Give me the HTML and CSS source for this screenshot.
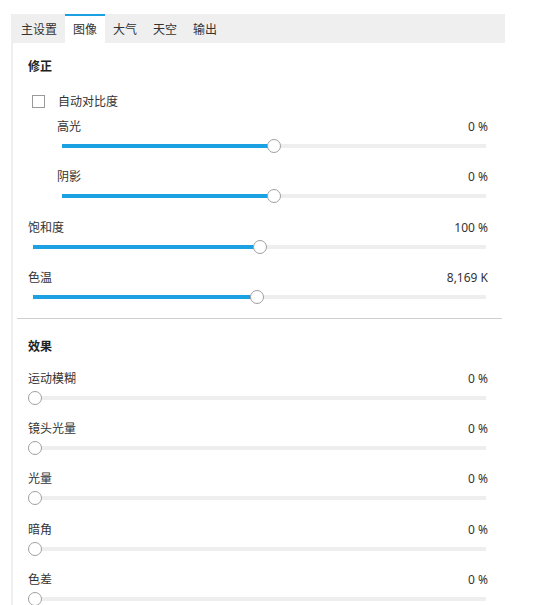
FILE: index.html
```html
<!DOCTYPE html>
<html lang="zh">
<head>
<meta charset="utf-8">
<link rel="stylesheet" href="styles.css">
</head>
<body>
<div class="app">
  <div class="tabs">
    <div class="tab">主设置</div>
    <div class="tab active">图像</div>
    <div class="tab">大气</div>
    <div class="tab">天空</div>
    <div class="tab">输出</div>
  </div>
  <div class="panel">
    <section class="group">
      <h3 class="heading">修正</h3>
      <label class="check-row"><span class="checkbox"></span><span>自动对比度</span></label>
      <div class="row indent">
        <div class="row-head"><span>高光</span><span class="val">0 %</span></div>
        <div class="slider" style="--p:0.5"><div class="fill"></div><div class="thumb"></div></div>
      </div>
      <div class="row indent">
        <div class="row-head"><span>阴影</span><span class="val">0 %</span></div>
        <div class="slider" style="--p:0.5"><div class="fill"></div><div class="thumb"></div></div>
      </div>
      <div class="row">
        <div class="row-head"><span>饱和度</span><span class="val">100 %</span></div>
        <div class="slider" style="--p:0.5"><div class="fill"></div><div class="thumb"></div></div>
      </div>
      <div class="row">
        <div class="row-head"><span>色温</span><span class="val">8,169 K</span></div>
        <div class="slider" style="--p:0.494"><div class="fill"></div><div class="thumb"></div></div>
      </div>
    </section>
    <hr class="divider">
    <section class="group effects">
      <h3 class="heading">效果</h3>
      <div class="row">
        <div class="row-head"><span>运动模糊</span><span class="val">0 %</span></div>
        <div class="slider" style="--p:0"><div class="fill"></div><div class="thumb"></div></div>
      </div>
      <div class="row">
        <div class="row-head"><span>镜头光量</span><span class="val">0 %</span></div>
        <div class="slider" style="--p:0"><div class="fill"></div><div class="thumb"></div></div>
      </div>
      <div class="row">
        <div class="row-head"><span>光量</span><span class="val">0 %</span></div>
        <div class="slider" style="--p:0"><div class="fill"></div><div class="thumb"></div></div>
      </div>
      <div class="row">
        <div class="row-head"><span>暗角</span><span class="val">0 %</span></div>
        <div class="slider" style="--p:0"><div class="fill"></div><div class="thumb"></div></div>
      </div>
      <div class="row">
        <div class="row-head"><span>色差</span><span class="val">0 %</span></div>
        <div class="slider" style="--p:0"><div class="fill"></div><div class="thumb"></div></div>
      </div>
    </section>
  </div>
</div>
</body>
</html>
```
FILE: styles.css
```css
html, body {
  margin: 0;
  padding: 0;
  background: #fff;
}
body {
  font-family: "Noto Sans", "Noto Sans CJK SC", sans-serif;
  font-size: 12px;
  color: #333;
  overflow: hidden;
}
.app {
  margin: 14px 0 0 11px;
  width: 494px;
}
.tabs {
  display: flex;
  height: 29px;
  background: #efefef;
  padding-left: 2px;
}
.tab {
  padding: 0 8px;
  box-sizing: border-box;
  display: flex;
  align-items: center;
  justify-content: center;
  border-top: 2px solid transparent;
  line-height: 16px;
  color: #333;
}
.tab.active {
  background: #fff;
  border-top-color: #1ba1e2;
}
.panel {
  border-left: 2px solid #efefef;
  height: 562px;
  overflow: hidden;
}
.group {
  padding: 16px 17px 0 15px;
  display: flex;
  flex-direction: column;
}
.heading {
  margin: 0 0 18px;
  font-size: 12px;
  line-height: 16px;
  font-weight: 700;
  color: #222;
}
.check-row {
  display: flex;
  align-items: center;
  height: 16px;
  margin-bottom: 10px;
  padding-left: 4px;
  gap: 13px;
}
.checkbox {
  width: 13px;
  height: 13px;
  box-sizing: border-box;
  border: 1px solid #9a9a9a;
  background: #fff;
}
.row {
  display: flex;
  flex-direction: column;
  margin-bottom: 16.25px;
}
.group > .row:last-child {
  margin-bottom: 14px;
}
.row.indent {
  margin-left: 29px;
}
.row-head {
  display: flex;
  justify-content: space-between;
  line-height: 16px;
  height: 16px;
  margin-bottom: 4px;
}
.val {
  color: #333;
}
.slider {
  position: relative;
  height: 14px;
  margin: 0 2px 0 5px;
}
.slider::before {
  content: "";
  position: absolute;
  left: 0;
  right: 0;
  top: 5px;
  height: 4px;
  background: #eeeeee;
}
.fill {
  position: absolute;
  left: 0;
  top: 5px;
  height: 4px;
  width: calc(var(--p) * 100%);
  background: #1ba1e2;
}
.thumb {
  position: absolute;
  top: 0;
  left: calc(2px + var(--p) * (100% - 4px) - 7px);
  width: 14px;
  height: 14px;
  box-sizing: border-box;
  border-radius: 50%;
  border: 1.5px solid #a0a0a0;
  background: #fff;
}
.divider {
  margin: 0 3px 0 4px;
  border: 0;
  border-top: 1px solid #cfcfcf;
  height: 0;
}
.group.effects {
  padding-top: 20px;
}
.group.effects .heading {
  margin-bottom: 16px;
}
```
